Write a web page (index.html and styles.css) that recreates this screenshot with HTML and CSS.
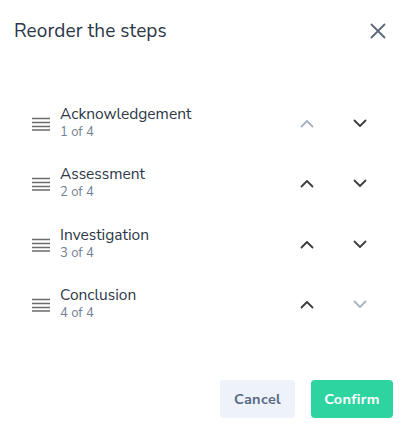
FILE: index.html
```html
<!DOCTYPE html>
<html>
<head>
<meta charset="utf-8">
<link rel="stylesheet" href="styles.css">
</head>
<body>
<div class="modal">
  <div class="header">
    <h1 class="title">Reorder the steps</h1>
    <button class="close" aria-label="Close">
      <svg width="16" height="16" viewBox="0 0 16 16"><path d="M1.5 1.5L14.5 14.5M14.5 1.5L1.5 14.5" stroke="#5b6778" stroke-width="1.8" stroke-linecap="round" fill="none"/></svg>
    </button>
  </div>
  <ul class="steps">
    <li class="step">
      <span class="handle"><svg width="18" height="14" viewBox="0 0 18 14"><path d="M0 1.5H18M0 5.5H18M0 9.5H18M0 13H18" stroke="#6b6b6b" stroke-width="1.6"/></svg></span>
      <div class="info"><div class="name">Acknowledgement</div><div class="pos">1 of 4</div></div>
      <button class="arrow disabled"><svg width="14" height="9" viewBox="0 0 14 9"><path d="M1.5 7.5L7 2L12.5 7.5" stroke="currentColor" stroke-width="1.8" fill="none" stroke-linecap="round" stroke-linejoin="round"/></svg></button>
      <button class="arrow"><svg width="14" height="9" viewBox="0 0 14 9"><path d="M1.5 1.5L7 7L12.5 1.5" stroke="currentColor" stroke-width="1.8" fill="none" stroke-linecap="round" stroke-linejoin="round"/></svg></button>
    </li>
    <li class="step">
      <span class="handle"><svg width="18" height="14" viewBox="0 0 18 14"><path d="M0 1.5H18M0 5.5H18M0 9.5H18M0 13H18" stroke="#6b6b6b" stroke-width="1.6"/></svg></span>
      <div class="info"><div class="name">Assessment</div><div class="pos">2 of 4</div></div>
      <button class="arrow"><svg width="14" height="9" viewBox="0 0 14 9"><path d="M1.5 7.5L7 2L12.5 7.5" stroke="currentColor" stroke-width="1.8" fill="none" stroke-linecap="round" stroke-linejoin="round"/></svg></button>
      <button class="arrow"><svg width="14" height="9" viewBox="0 0 14 9"><path d="M1.5 1.5L7 7L12.5 1.5" stroke="currentColor" stroke-width="1.8" fill="none" stroke-linecap="round" stroke-linejoin="round"/></svg></button>
    </li>
    <li class="step">
      <span class="handle"><svg width="18" height="14" viewBox="0 0 18 14"><path d="M0 1.5H18M0 5.5H18M0 9.5H18M0 13H18" stroke="#6b6b6b" stroke-width="1.6"/></svg></span>
      <div class="info"><div class="name">Investigation</div><div class="pos">3 of 4</div></div>
      <button class="arrow"><svg width="14" height="9" viewBox="0 0 14 9"><path d="M1.5 7.5L7 2L12.5 7.5" stroke="currentColor" stroke-width="1.8" fill="none" stroke-linecap="round" stroke-linejoin="round"/></svg></button>
      <button class="arrow"><svg width="14" height="9" viewBox="0 0 14 9"><path d="M1.5 1.5L7 7L12.5 1.5" stroke="currentColor" stroke-width="1.8" fill="none" stroke-linecap="round" stroke-linejoin="round"/></svg></button>
    </li>
    <li class="step">
      <span class="handle"><svg width="18" height="14" viewBox="0 0 18 14"><path d="M0 1.5H18M0 5.5H18M0 9.5H18M0 13H18" stroke="#6b6b6b" stroke-width="1.6"/></svg></span>
      <div class="info"><div class="name">Conclusion</div><div class="pos">4 of 4</div></div>
      <button class="arrow"><svg width="14" height="9" viewBox="0 0 14 9"><path d="M1.5 7.5L7 2L12.5 7.5" stroke="currentColor" stroke-width="1.8" fill="none" stroke-linecap="round" stroke-linejoin="round"/></svg></button>
      <button class="arrow disabled"><svg width="14" height="9" viewBox="0 0 14 9"><path d="M1.5 1.5L7 7L12.5 1.5" stroke="currentColor" stroke-width="1.8" fill="none" stroke-linecap="round" stroke-linejoin="round"/></svg></button>
    </li>
  </ul>
  <div class="footer">
    <button class="btn cancel">Cancel</button>
    <button class="btn confirm">Confirm</button>
  </div>
</div>
</body>
</html>
```
FILE: styles.css
```css
* { box-sizing: border-box; }
html, body { margin: 0; padding: 0; background: #fff; }
body { font-family: "Nunito Sans", Lato, "Open Sans", sans-serif; color: #2d3748; }
.modal { width: 407px; height: 432px; display: flex; flex-direction: column; }
.header { display: flex; align-items: center; justify-content: space-between; padding: 18px 14px 0 14px; height: 44px; }
.title { margin: 0; font-size: 19px; font-weight: 400; color: #2d3748; letter-spacing: 0.1px; }
.close { border: 0; background: none; padding: 0; width: 16px; height: 16px; margin-right: 7px; display: flex; }
.steps { list-style: none; margin: 0; padding: 48px 0 0 0; }
.step { display: flex; align-items: center; height: 60.5px; padding-left: 32px; }
.handle { width: 18px; height: 14px; display: flex; margin-right: 10px; margin-top: 3px; }
.info { flex: 1; }
.name { font-size: 15.5px; line-height: 19px; color: #2d3748; }
.pos { font-size: 13px; line-height: 18px; color: #718096; }
.arrow { border: 0; background: none; padding: 0; width: 14px; height: 9px; display: flex; color: #3d3d3d; margin-top: 2px; }
.arrow + .arrow { margin-left: 39px; margin-right: 40px; }
.arrow.disabled { color: #a7b1c4; }
.footer { display: flex; justify-content: flex-end; gap: 16px; padding: 0 14px 0 0; margin-top: 46px; }
.btn { border: 0; border-radius: 4px; height: 38px; font-family: inherit; font-size: 14.5px; font-weight: 700; letter-spacing: 0.3px; }
.cancel { background: #eef2fb; color: #5a6a85; width: 75px; }
.confirm { background: #2dd4a0; color: #fff; width: 82px; }
```
